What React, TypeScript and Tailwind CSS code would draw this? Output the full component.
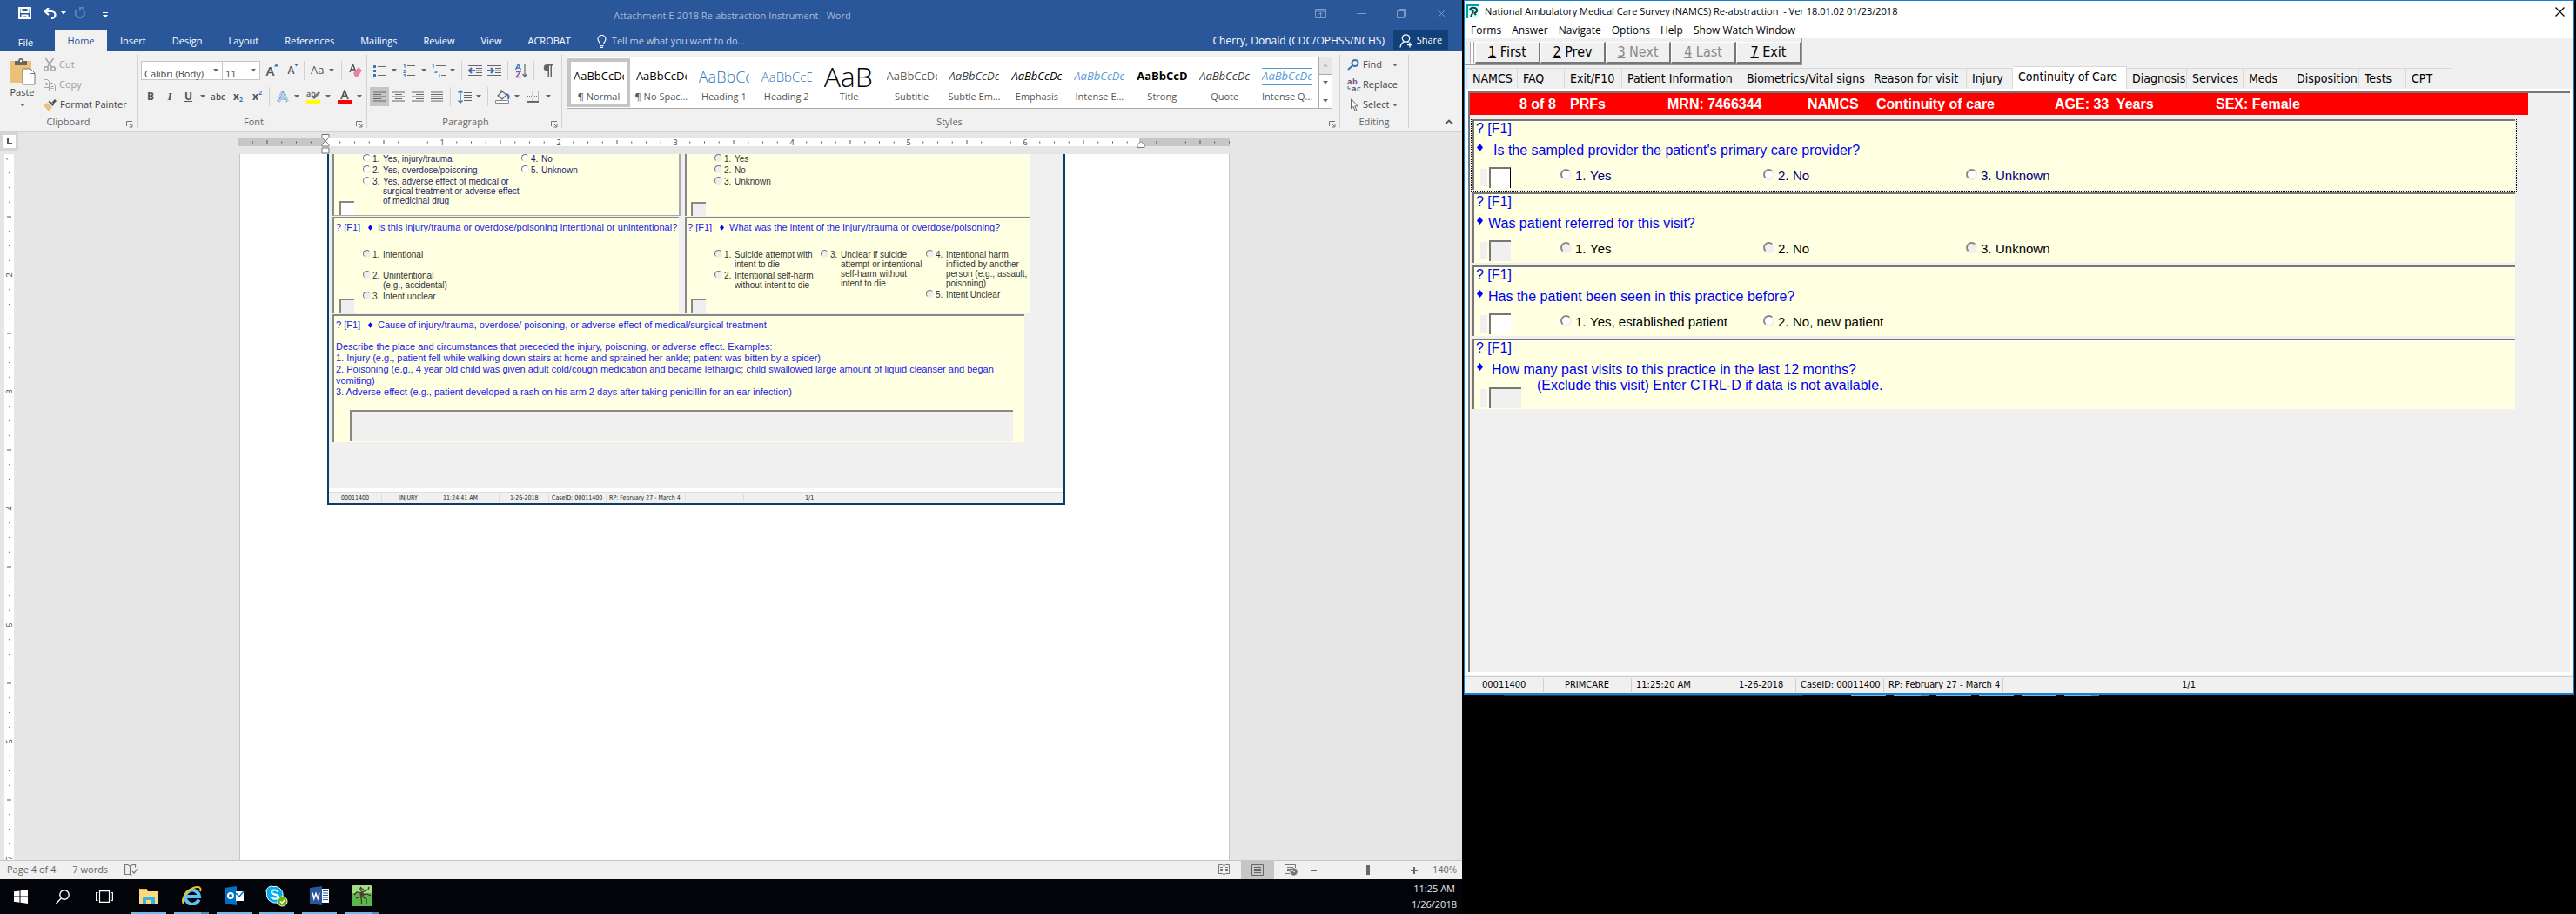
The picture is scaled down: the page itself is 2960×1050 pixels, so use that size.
import React, { ReactNode } from 'react';

const UI = "font-['Open_Sans','Noto_Sans',sans-serif]";
const TAHOMA = "font-['DejaVu_Sans_Condensed','DejaVu_Sans',sans-serif]";
const ARIAL = "font-['Liberation_Sans',Arial,sans-serif]";

/* ---------- small shared pieces ---------- */

function Caret({ className = 'text-[#666]' }: { className?: string }) {
  return (
    <svg width="6" height="4" viewBox="0 0 6 4" className={`shrink-0 ${className}`} fill="currentColor">
      <path d="M0 0h6L3 3.5z" />
    </svg>
  );
}

function Launcher({ label }: { label: string }) {
  return (
    <button aria-label={label} className="absolute right-1 bottom-0 text-[#777]">
      <svg width="8" height="8" viewBox="0 0 8 8" fill="none" stroke="currentColor">
        <path d="M.5 6V.5H7M3 3l3.5 3.5M7 3.5V7H3.5" />
      </svg>
    </button>
  );
}

function VSep() {
  return <div className="h-[22px] w-px shrink-0 bg-[#d2d2d2]" />;
}

function Tool({ label, children, className = '' }: { label: string; children: ReactNode; className?: string }) {
  return (
    <button aria-label={label} className={`flex h-[22px] shrink-0 items-center justify-center ${className}`}>
      {children}
    </button>
  );
}

function Diamond({ small = false }: { small?: boolean }) {
  return (
    <svg width={small ? 5 : 7} height={small ? 7 : 9} viewBox="0 0 7 9" className="shrink-0" fill="#00f">
      <path d="M3.5 0 7 4.5 3.5 9 0 4.5z" />
    </svg>
  );
}

/* ---------- Word: title bar and tabs ---------- */

function WordTitleBar() {
  return (
    <div className="flex h-[35px] items-start bg-[#2a579a] pt-2 text-white">
      <div className="flex flex-1 items-center pl-[21px]">
        <button aria-label="Save">
          <svg width="15" height="14" viewBox="0 0 15 14" fill="none" stroke="#fff" strokeWidth="2">
            <path d="M1 1h13v12H1zM3.500 1v5h8V1" />
            <path d="M4.500 13V9.500h6V13" />
          </svg>
        </button>
        <button aria-label="Undo" className="ml-[14px] flex items-center gap-[5px]">
          <svg width="15" height="13" viewBox="0 0 15 13" fill="none" stroke="#fff" strokeWidth="2.200">
            <path d="M6 0 1.500 4 6 8M2 4h7c6 0 6 8 0 8" />
          </svg>
          <Caret className="text-white" />
        </button>
        <button aria-label="Redo" className="ml-2">
          <svg width="15" height="14" viewBox="0 0 15 14" fill="none" stroke="#5f82b5" strokeWidth="2">
            <path d="M5 2.500A5.300 5.300 0 1 0 11.500 3M8 4.500V1h5" />
          </svg>
        </button>
        <button aria-label="Customize quick access toolbar" className="ml-[19px] flex flex-col items-center gap-[2px] pt-1">
          <span className="h-px w-[6px] bg-white" />
          <Caret className="text-white" />
        </button>
      </div>
      <h1 className="pt-px text-[11px] leading-[18px] text-[#a8bad8]">Attachment E-2018 Re-abstraction Instrument - Word</h1>
      <div className="flex flex-1 justify-end gap-[35px] pt-[2px] pr-[18px] text-[#7f9ac5]">
        <button aria-label="Ribbon display options">
          <svg width="13" height="11" viewBox="0 0 13 11" fill="none" stroke="currentColor">
            <path d="M.5.5h12v10H.5zM.5 3h12M6.500 9V4.500M4.500 6.500l2-2 2 2" />
          </svg>
        </button>
        <button aria-label="Minimize">
          <svg width="11" height="11" viewBox="0 0 11 11" stroke="currentColor">
            <path d="M0 5.500h11" />
          </svg>
        </button>
        <button aria-label="Restore">
          <svg width="11" height="11" viewBox="0 0 11 11" fill="none" stroke="currentColor">
            <path d="M.5 2.500h8v8h-8zM2.500 2.500v-2h8v8h-2" />
          </svg>
        </button>
        <button aria-label="Close">
          <svg width="11" height="11" viewBox="0 0 11 11" stroke="currentColor">
            <path d="m.5.5 10 10M10.500.5l-10 10" />
          </svg>
        </button>
      </div>
    </div>
  );
}

function WordTabs() {
  return (
    <div className="flex h-6 items-stretch bg-[#2a579a] text-[11px] text-white">
      <button className="w-[63px] pt-1 pr-1">File</button>
      <button className="w-[60px] bg-[#f1f1f1] text-[#2a579a]">Home</button>
      <nav className="flex gap-[30px] pl-[15px]">
        {['Insert', 'Design', 'Layout', 'References', 'Mailings', 'Review', 'View', 'ACROBAT'].map((t) => (
          <button key={t}>{t}</button>
        ))}
      </nav>
      <button className="ml-[30px] flex items-center gap-[6px] text-[#c3d0e5]">
        <svg width="11" height="15" viewBox="0 0 11 15" fill="none" stroke="#fff" strokeWidth="1.200">
          <path d="M3.500 10.500c0-2-2.500-3-2.500-5.500a4.500 4.500 0 0 1 9 0c0 2.500-2.500 3.500-2.500 5.500zM3.500 12.500h4M4 14.300h3" />
        </svg>
        Tell me what you want to do...
      </button>
      <div className="flex-1" />
      <button className="text-[12px]">Cherry, Donald (CDC/OPHSS/NCHS)</button>
      <button className="mr-4 mb-px ml-[10px] flex w-[63px] items-center justify-center gap-1 bg-[#124078]">
        <svg width="16" height="16" viewBox="0 0 16 16" fill="none" stroke="#fff" strokeWidth="1.300">
          <circle cx="7.500" cy="5" r="4.200" />
          <path d="M1 15.500c.5-4 2-5.500 4.500-6.500M9.500 9l1 .7M12 9.500v6M9 12.500h6" />
        </svg>
        Share
      </button>
    </div>
  );
}

/* ---------- Word: ribbon ---------- */

function GroupLabel({ children }: { children: ReactNode }) {
  return <div className="mt-auto text-center text-[11px] leading-[14px] text-[#666]">{children}</div>;
}

function ClipboardGroup() {
  return (
    <section className="relative flex w-[158px] flex-col border-r border-[#d2d2d2]">
      <div className="flex">
        <button className="flex w-[43px] flex-col items-center pl-2 text-[11px] leading-[16px] text-[#444]">
          <svg width="30" height="31" viewBox="0 0 30 31" className="mt-1">
            <path d="M1 3h24v25H1z" fill="#ebc177" />
            <path d="M6 3h4a3 3 0 0 1 6 0h4v5H6z" fill="#666" />
            <circle cx="13" cy="3" r="1.200" fill="#fff" />
            <path d="M15 12h9l5 5v13H15z" fill="#fff" stroke="#777" />
            <path d="M23.500 12v5.500H29" fill="none" stroke="#777" />
          </svg>
          <span>Paste</span>
          <span className="mt-[5px]"><Caret /></span>
        </button>
        <div className="ml-[7px] flex flex-col text-[11px]">
          <button className="flex h-[23px] items-center gap-1 text-[#a0a0a0]">
            <svg width="14" height="15" viewBox="0 0 14 15" fill="none" stroke="#a5a5a5" strokeWidth="1.600">
              <path d="M2.500 0 9.500 10M11.500 0l-7 10" />
              <circle cx="3" cy="12" r="2.200" />
              <circle cx="11" cy="12" r="2.200" />
            </svg>
            Cut
          </button>
          <button className="flex h-[23px] items-center gap-1 text-[#a0a0a0]">
            <svg width="14" height="14" viewBox="0 0 14 14" fill="none" stroke="#a5a5a5">
              <path d="M6 9.500H.5v-9h4l2 2V4M2.500 4.500h2M2.500 6.500h2M6.500 4.500h4l3 3v6h-7zM8.500 8.500h3M8.500 10.500h3" />
            </svg>
            Copy
          </button>
          <button className="flex h-[23px] items-center gap-1 text-[#444]">
            <svg width="15" height="14" viewBox="0 0 15 14">
              <path d="M0 7l4-3 6 5-4 5z" fill="#ebc177" />
              <path d="m5.500 3 5 5 1.500-1.500-5-5zM9.500 3.500 13 0l2 2-3.500 3.500z" fill="#555" />
            </svg>
            Format Painter
          </button>
        </div>
      </div>
      <GroupLabel>Clipboard</GroupLabel>
      <Launcher label="Clipboard options" />
    </section>
  );
}

function FontGroup() {
  return (
    <section className="relative flex w-[264px] flex-col border-r border-[#d2d2d2] pl-1 text-[#555]">
      <div className="mt-[7px] flex h-[22px] items-center">
        <div className="relative h-full w-[94px] border border-[#c6c6c6] bg-white">
          <select aria-label="Font" defaultValue="c" className="h-full w-full appearance-none pl-[3px] text-[11px] text-[#444]">
            <option value="c">Calibri (Body)</option>
          </select>
          <span className="pointer-events-none absolute top-1/2 right-1 -translate-y-1/2"><Caret className="block text-[#666]" /></span>
        </div>
        <div className="relative h-full w-[43px] border border-l-0 border-[#c6c6c6] bg-white">
          <select aria-label="Font size" defaultValue="11" className="h-full w-full appearance-none pl-[3px] text-[11px] text-[#444]">
            <option>11</option>
          </select>
          <span className="pointer-events-none absolute top-1/2 right-1 -translate-y-1/2"><Caret className="block text-[#666]" /></span>
        </div>
        <Tool label="Grow font" className="ml-[6px] w-4 text-[15px] font-semibold">A<svg width="5" height="4" className="mb-3" fill="#3b73b9"><path d="M0 3.500h5L2.500 0z" /></svg></Tool>
        <Tool label="Shrink font" className="ml-2 w-4 text-[12px] font-semibold">A<svg width="5" height="4" className="mb-3" fill="#3b73b9"><path d="M0 0h5L2.500 3.500z" /></svg></Tool>
        <div className="ml-1"><VSep /></div>
        <Tool label="Change case" className="ml-[7px] gap-[6px] text-[13px]">Aa<Caret /></Tool>
        <div className="ml-2"><VSep /></div>
        <Tool label="Clear formatting" className="ml-2">
          <svg width="16" height="16" viewBox="0 0 16 16">
            <path d="M1 10 4.500 1 8 10M2.500 7h4" fill="none" stroke="#555" strokeWidth="1.500" />
            <path d="m5 11 6-7 4 4-5 7H7z" fill="#e8839b" />
          </svg>
        </Tool>
      </div>
      <div className="mt-2 flex h-[22px] items-center pl-[6px]">
        <Tool label="Bold" className="w-[10px] text-[12px] font-bold">B</Tool>
        <Tool label="Italic" className="ml-3 w-[10px] font-['Liberation_Serif',serif] text-[13px] font-bold italic">I</Tool>
        <Tool label="Underline" className="ml-3 gap-[9px] text-[12px] font-bold"><u>U</u><Caret /></Tool>
        <Tool label="Strikethrough" className="ml-[6px] text-[10px] font-semibold"><s>abc</s></Tool>
        <Tool label="Subscript" className="ml-[7px] w-[15px] text-[12px] font-bold">x<span className="pt-2 text-[7px] text-[#3b73b9]">2</span></Tool>
        <Tool label="Superscript" className="ml-[7px] w-[15px] text-[12px] font-bold">x<span className="pb-2 text-[7px] text-[#3b73b9]">2</span></Tool>
        <div className="ml-[6px]"><VSep /></div>
        <Tool label="Text effects" className="ml-2 gap-[6px]">
          <svg width="14" height="14" viewBox="0 0 14 14" fill="none"><path d="M2 13 7 1l5 12M4 9h6" stroke="#9cc2e8" strokeWidth="4" /><path d="M2 13 7 1l5 12M4 9h6" stroke="#fff" strokeWidth="2" /><path d="M2 13 7 1l5 12M4 9h6" stroke="#3b73b9" strokeWidth=".8" /></svg>
          <Caret />
        </Tool>
        <Tool label="Highlight" className="ml-2 gap-[6px]">
          <svg width="16" height="16" viewBox="0 0 16 16" className="overflow-visible"><path d="M0 12h16v4H0z" fill="#ff0" /><text x="0" y="8" fontSize="9" fontWeight="600" fill="#555">ab</text><path d="m7 10 7-8 2 1.500-6.500 7.500z" fill="#777" /></svg>
          <Caret />
        </Tool>
        <Tool label="Font colour" className="ml-2 gap-[6px]">
          <svg width="16" height="16" viewBox="0 0 16 16"><path d="M0 12h16v4H0z" fill="#f00" /><path d="M4 11 8 1l4 10M5.500 7.500h5" fill="none" stroke="#555" strokeWidth="1.800" /></svg>
          <Caret />
        </Tool>
      </div>
      <GroupLabel>Font</GroupLabel>
      <Launcher label="Font options" />
    </section>
  );
}

function Lines({ rows }: { rows: [number, number][] }) {
  return (
    <svg width="14" height="14" viewBox="0 0 14 14" stroke="#666">
      {rows.map(([a, b], i) => (
        <path key={i} d={`M${a} ${i * 2.5 + 2}H${b}`} />
      ))}
    </svg>
  );
}

const full: [number, number] = [0, 14];

function ParagraphGroup() {
  return (
    <section className="relative flex w-[224px] flex-col border-r border-[#d2d2d2] pl-[3px]">
      <div className="mt-[7px] flex h-[22px] items-center pl-1">
        <Tool label="Bullets" className="gap-[7px]">
          <svg width="14" height="15" viewBox="0 0 14 15"><path d="M0 1h3v3H0zM0 6h3v3H0zM0 11h3v3H0z" fill="#3b73b9" /><path d="M5 2.500h9M5 7.500h9M5 12.500h9" stroke="#666" /></svg>
          <Caret />
        </Tool>
        <Tool label="Numbering" className="ml-[7px] gap-[7px]">
          <svg width="14" height="16" viewBox="0 0 14 16" className="overflow-visible"><g fontSize="6" fontWeight="700" fill="#3b73b9"><text y="5">1</text><text y="10.500">2</text><text y="16">3</text></g><path d="M5 2.500h9M5 8.500h9M5 13.500h9" stroke="#666" /></svg>
          <Caret />
        </Tool>
        <Tool label="Multilevel list" className="ml-[6px] gap-[4px]">
          <svg width="17" height="16" viewBox="0 0 17 16" className="overflow-visible"><g fontSize="6" fontWeight="700" fill="#3b73b9"><text y="5">1</text><text x="3" y="10.500">a</text><text x="8" y="16">i</text></g><path d="M5 2.500h12M8 8.500h9M11 13.500h6" stroke="#666" /></svg>
          <Caret />
        </Tool>
        <div className="ml-[7px]"><VSep /></div>
        <Tool label="Decrease indent" className="ml-[7px]">
          <svg width="16" height="14" viewBox="0 0 16 14"><path d="M0 1.500h16M9 4.500h7M9 7h7M9 9.500h7M0 12.500h16" stroke="#666" /><path d="M8 7H1m3-3L1 7l3 3" fill="none" stroke="#3b73b9" strokeWidth="2" /></svg>
        </Tool>
        <Tool label="Increase indent" className="ml-[6px]">
          <svg width="16" height="14" viewBox="0 0 16 14"><path d="M0 1.500h16M9 4.500h7M9 7h7M9 9.500h7M0 12.500h16" stroke="#666" /><path d="M0 7h7M4 4l3 3-3 3" fill="none" stroke="#3b73b9" strokeWidth="2" /></svg>
        </Tool>
        <div className="ml-[7px]"><VSep /></div>
        <Tool label="Sort" className="ml-2">
          <svg width="14" height="17" viewBox="0 0 14 17"><path d="M.5 7 3.500.5 6.500 7M1.500 5h4" fill="none" stroke="#3b73b9" strokeWidth="1.300" /><path d="M1 9.500h5L1 15.500h5.500" fill="none" stroke="#8b4fa0" strokeWidth="1.300" /><path d="M11 1v14M8.500 12l2.500 3 2.500-3" fill="none" stroke="#666" strokeWidth="1.200" /></svg>
        </Tool>
        <div className="ml-[7px]"><VSep /></div>
        <Tool label="Show formatting marks" className="ml-[10px]">
          <svg width="11" height="14" viewBox="0 0 11 14" fill="#666"><path d="M4.500 0H11v1.500h-1V14H8.500V1.500H7V14H5.500V7.500h-1a3.700 3.700 0 0 1 0-7.500z" /></svg>
        </Tool>
      </div>
      <div className="mt-2 flex h-[22px] items-center">
        <Tool label="Align left" className="w-[22px] bg-[#c5c5c5]"><Lines rows={[full, [0, 9], full, [0, 9], full]} /></Tool>
        <Tool label="Center" className="w-[22px]"><Lines rows={[full, [3, 11], full, [3, 11], full]} /></Tool>
        <Tool label="Align right" className="w-[22px]"><Lines rows={[full, [5, 14], full, [5, 14], full]} /></Tool>
        <Tool label="Justify" className="w-[22px]"><Lines rows={[full, full, full, full, full]} /></Tool>
        <div className="ml-1"><VSep /></div>
        <Tool label="Line spacing" className="ml-2 gap-[5px]">
          <svg width="16" height="16" viewBox="0 0 16 16" fill="none"><path d="M3 1v14M.5 3.500 3 1l2.500 2.500M.5 12.500 3 15l2.500-2.500" stroke="#3b73b9" strokeWidth="1.300" /><path d="M7 3.500h9M7 6.500h9M7 9.500h9M7 12.500h9" stroke="#666" /></svg>
          <Caret />
        </Tool>
        <div className="ml-[7px]"><VSep /></div>
        <Tool label="Shading" className="ml-2 gap-[5px]">
          <svg width="17" height="16" viewBox="0 0 17 16" fill="none"><path d="M.5 12.500h15v3H.5z" fill="#fff" stroke="#888" /><path d="m3 7 5-5 5 4-5 5zM7 4V0" stroke="#666" strokeWidth="1.200" /><path d="M13 5c3 1 3 3 2 6" stroke="#3b73b9" strokeWidth="2" /></svg>
          <Caret />
        </Tool>
        <Tool label="Borders" className="ml-2 gap-2">
          <svg width="14" height="14" viewBox="0 0 14 14" stroke="#777" fill="none"><path d="M.5.5h13v12H.5zM7 1v12M1 6.500h12" strokeDasharray="1 1" /><path d="M0 13h14" stroke="#444" strokeWidth="1.500" /></svg>
          <Caret />
        </Tool>
      </div>
      <GroupLabel>Paragraph</GroupLabel>
      <Launcher label="Paragraph options" />
    </section>
  );
}

const styles: [string, string][] = [
  ['¶ Normal', 'text-[13px] text-black'],
  ['¶ No Spac...', 'text-[13px] text-black'],
  ['Heading 1', 'text-[18px] font-light text-[#2e74b5]'],
  ['Heading 2', 'text-[15px] font-light text-[#2e74b5]'],
  ['Title', 'text-[32px] font-light text-black'],
  ['Subtitle', 'text-[13px] text-[#5a5a5a]'],
  ['Subtle Em...', 'text-[13px] italic text-[#404040]'],
  ['Emphasis', 'text-[13px] italic text-black'],
  ['Intense E...', 'text-[13px] italic text-[#5b9bd5]'],
  ['Strong', 'text-[13px] font-bold text-black'],
  ['Quote', 'text-[13px] italic text-[#404040]'],
  ['Intense Q...', 'text-[13px] italic text-[#5b9bd5] border-y border-[#5b9bd5]'],
];

function StylesGroup() {
  return (
    <section className="relative flex flex-1 flex-col border-r border-[#d2d2d2] pr-2 pl-[5px]">
      <div className="mt-[2px] flex h-[60px] border border-[#ababab] bg-white">
        <div className="flex flex-1 items-center">
          {styles.map(([name, cls], i) => (
            <button
              key={name}
              className={`flex h-14 min-w-0 flex-1 flex-col items-center justify-end border-4 ${i === 0 ? 'border-[#c5c5c5]' : 'border-transparent'}`}
            >
              <span className={`flex w-[58px] items-center overflow-hidden whitespace-nowrap ${name === 'Title' ? 'mb-1 h-6' : 'mb-[6px] h-5'} ${cls}`}>
                {name === 'Title' ? 'AaB' : 'AaBbCcDc'}
              </span>
              <span className="mb-px text-[11px] leading-[14px] whitespace-nowrap text-[#555]">{name}</span>
            </button>
          ))}
        </div>
        <div className="flex w-[15px] flex-col divide-y divide-[#ababab] border-l border-[#ababab]">
          <button aria-label="Previous row" className="flex flex-1 items-center justify-center bg-[#e6e6e6]">
            <svg width="6" height="4" fill="#bbb"><path d="M0 3.500h6L3 0z" /></svg>
          </button>
          <button aria-label="Next row" className="flex flex-1 items-center justify-center"><Caret /></button>
          <button aria-label="More styles" className="flex flex-1 flex-col items-center justify-center gap-[2px]">
            <span className="h-px w-[7px] bg-[#666]" />
            <Caret />
          </button>
        </div>
      </div>
      <GroupLabel>Styles</GroupLabel>
      <Launcher label="Styles options" />
    </section>
  );
}

function EditingGroup() {
  return (
    <>
      <section className="flex w-[79px] flex-col border-r border-[#d2d2d2] pl-2 text-[11px] text-[#444]">
        <button className="flex h-[23px] items-center gap-1">
          <svg width="14" height="13" viewBox="0 0 14 13" fill="none" stroke="#3b73b9" strokeWidth="2"><circle cx="9" cy="4.500" r="3.500" /><path d="M6.500 7 1 12" /></svg>
          Find<span className="ml-2"><Caret /></span>
        </button>
        <button className="flex h-[23px] items-center gap-[2px]">
          <svg width="16" height="16" viewBox="0 0 16 16" fontSize="9" fontWeight="700" className="overflow-visible"><text y="7" fill="#555">a</text><text x="6" y="7" fill="#8b4fa0">b</text><text x="5" y="15" fill="#555">a</text><text x="11" y="15" fill="#3b73b9">c</text><path d="M1 9v3h3" fill="none" stroke="#3b73b9" /></svg>
          Replace
        </button>
        <button className="flex h-[23px] items-center gap-1">
          <svg width="14" height="15" viewBox="0 0 14 15" fill="#fff" stroke="#666"><path d="M4.500.8v11l2.500-2.500 2 5 1.800-.8-2-4.700h3.400z" /></svg>
          Select<Caret />
        </button>
        <div className="mt-auto pr-2 text-center leading-[14px] text-[#666]">Editing</div>
      </section>
      <div className="flex w-[61px] items-end justify-end pr-[10px] pb-1">
        <button aria-label="Collapse the ribbon">
          <svg width="10" height="6" viewBox="0 0 10 6" fill="none" stroke="#555" strokeWidth="1.800"><path d="m1 5.500 4-4 4 4" /></svg>
        </button>
      </div>
    </>
  );
}

/* ---------- Word: rulers and document ---------- */

const INCH = 134;

function HorizontalRuler() {
  const ticks = Array.from({ length: 69 }, (_, i) => i - 6).filter((n) => n !== 0 && n !== 56);
  return (
    <div className="flex h-[25px]">
      <button aria-label="Tab selector" className="flex h-[21px] w-[21px] items-center justify-center bg-[#d5d5d5]">
        <span className="flex h-[15px] w-[15px] items-center justify-center bg-white">
          <svg width="6" height="7" fill="none" stroke="#555" strokeWidth="2"><path d="M1 0v6h5" /></svg>
        </span>
      </button>
      <div className="flex flex-1 justify-center pr-[15px]">
        <svg width="1140" height="25" viewBox="0 0 1140 25" fontSize="9" fill="#444">
          <path d="M0 6h1140v10H0z" fill="#c6c6c6" />
          <path d="M100 6h936v10H100z" fill="#fff" />
          {ticks.map((n) => {
            const x = 101 + (n * INCH) / 8;
            if (n > 0 && n % 8 === 0) return <text key={n} x={x} y="15" textAnchor="middle">{n / 8}</text>;
            return <path key={n} d={Math.abs(n % 8) === 4 ? `M${x} 9v5` : `M${x} 10.500v2`} stroke="#555" />;
          })}
          <g fill="#fff" stroke="#777">
            <path d="M97 2.500h8v3l-4 5-4-5zM97 16v-2l4-4 4 4v2zM97 18h8v6h-8z" />
            <path d="M1034 17.500v-3l4-4 4 4v3z" />
          </g>
        </svg>
      </div>
    </div>
  );
}

function VerticalRuler() {
  const ticks = Array.from({ length: 49 }, (_, i) => i);
  return (
    <svg width="11" className="ml-[5px] w-[11px] shrink-0 self-stretch overflow-hidden bg-white" fontSize="9" fill="#444">
      {ticks.map((n) => {
        const y = 5 + (n * INCH) / 8;
        if (n % 8 === 0) return <text key={n} x="9" y={y} textAnchor="middle" transform={`rotate(-90 9 ${y})`}>{n / 8 + 1}</text>;
        return <path key={n} d={n % 8 === 4 ? `M3 ${y}h5` : `M5 ${y}h2`} stroke="#555" />;
      })}
    </svg>
  );
}

type Opt = { n: number; text: string[] };

function DocOptions({ name, cols, white = false }: { name: string; cols: [string, Opt[]][]; white?: boolean }) {
  return (
    <div className={`flex text-[10px] leading-[11px] ${white ? 'text-[#1c1c70]' : 'text-[#333]'}`}>
      {cols.map(([w, opts], i) => (
        <div key={i} className={`flex shrink-0 flex-col gap-[2px] ${w}`}>
          {opts.map((o) => (
            <label key={o.n} className="flex whitespace-nowrap">
              <input
                type="radio"
                name={name}
                className={`mr-[2px] h-[9px] w-[9px] shrink-0 appearance-none rounded-full border border-[#777] border-r-[#eee] border-b-[#eee] ${white ? 'bg-white' : 'bg-[#eee]'}`}
              />
              <span className="w-3 shrink-0">{o.n}.</span>
              <span>{o.text.map((t, k) => <span key={k} className="block">{t}</span>)}</span>
            </label>
          ))}
        </div>
      ))}
    </div>
  );
}

function DocBox({ label, white = false }: { label: string; white?: boolean }) {
  return (
    <input
      aria-label={label}
      className={`h-4 w-[17px] shrink-0 self-end border-t-2 border-l-2 border-[#888] ${white ? 'bg-white' : 'bg-[#eee]'}`}
    />
  );
}

function F1({ q }: { q: string }) {
  return (
    <p className="flex items-center text-[11px] leading-[13px] whitespace-nowrap text-[#2020f0]">
      <span className="w-[37px]">? [F1]</span>
      <Diamond small />
      <span className="ml-[6px]">{q}</span>
    </p>
  );
}

function EmbeddedForm() {
  return (
    <div className={`ml-[100px] w-[848px] border-x-2 border-b-2 border-[#123a66] bg-[#f0f0f0] ${ARIAL}`}>
      <div className="pl-[4px]">
        <div className="flex gap-[5px]">
          <div className="flex h-[71px] w-[400px] border-r-2 border-b border-l-2 border-r-[#aaa] border-b-[#aaa] border-l-[#888] bg-[#ffffe1] pl-[6px]">
            <DocBox label="Injury answer" white />
            <div className="ml-[10px]">
              <DocOptions
                white
                name="d1"
                cols={[
                  ['w-[182px]', [{ n: 1, text: ['Yes, injury/trauma'] }, { n: 2, text: ['Yes, overdose/poisoning'] }, { n: 3, text: ['Yes, adverse effect of medical or', 'surgical treatment or adverse effect', 'of medicinal drug'] }]],
                  ['w-[120px]', [{ n: 4, text: ['No'] }, { n: 5, text: ['Unknown'] }]],
                ]}
              />
            </div>
          </div>
          <div className="flex h-[71px] w-[397px] border-l-2 border-[#888] bg-[#ffffe1] pl-[5px]">
            <DocBox label="Second answer" />
            <div className="ml-[10px]">
              <DocOptions name="d2" cols={[['w-[120px]', [{ n: 1, text: ['Yes'] }, { n: 2, text: ['No'] }, { n: 3, text: ['Unknown'] }]]]} />
            </div>
          </div>
        </div>
        <div className="mt-px flex gap-[7px]">
          <div className="flex h-[110px] w-[398px] flex-col border-t-2 border-l-2 border-[#888] bg-[#ffffe1] pt-1 pl-[2px]">
            <F1 q="Is this injury/trauma or overdose/poisoning intentional or unintentional?" />
            <div className="flex flex-1 pl-1">
              <DocBox label="Intentional answer" />
              <div className="mt-[19px] ml-[10px]">
                <DocOptions
                  name="d3"
                  cols={[['w-[182px]', [{ n: 1, text: ['Intentional', '\u00a0'] }, { n: 2, text: ['Unintentional', '(e.g., accidental)'] }, { n: 3, text: ['Intent unclear'] }]]]}
                />
              </div>
            </div>
          </div>
          <div className="flex h-[110px] w-[397px] flex-col border-t-2 border-l-2 border-[#888] bg-[#ffffe1] pt-1 pl-[1px]">
            <F1 q="What was the intent of the injury/trauma or overdose/poisoning?" />
            <div className="flex flex-1 pl-1">
              <DocBox label="Intent answer" />
              <div className="mt-[19px] ml-[10px]">
                <DocOptions
                  name="d4"
                  cols={[
                    ['w-[122px]', [{ n: 1, text: ['Suicide attempt with', 'intent to die'] }, { n: 2, text: ['Intentional self-harm', 'without intent to die'] }]],
                    ['w-[121px]', [{ n: 3, text: ['Unclear if suicide', 'attempt or intentional', 'self-harm without', 'intent to die'] }]],
                    ['w-[110px]', [{ n: 4, text: ['Intentional harm', 'inflicted by another', 'person (e.g., assault,', 'poisoning)'] }, { n: 5, text: ['Intent Unclear'] }]],
                  ]}
                />
              </div>
            </div>
          </div>
        </div>
        <div className="mt-[2px] h-[147px] w-[795px] border-t-2 border-l-2 border-[#888] bg-[#ffffe1] pt-1 pl-[2px] text-[11px] leading-[13px] text-[#2020f0]">
          <F1 q="Cause of injury/trauma, overdose/ poisoning, or adverse effect of medical/surgical treatment" />
          <p className="mt-3">Describe the place and circumstances that preceded the injury, poisoning, or adverse effect. Examples:</p>
          <p>1. Injury (e.g., patient fell while walking down stairs at home and sprained her ankle; patient was bitten by a spider)</p>
          <p>2. Poisoning (e.g., 4 year old child was given adult cold/cough medication and became lethargic; child swallowed large amount of liquid cleanser and began vomiting)</p>
          <p>3. Adverse effect (e.g., patient developed a rash on his arm 2 days after taking penicillin for an ear infection)</p>
          <textarea aria-label="Cause description" className="mt-[14px] ml-4 block h-[36px] w-[762px] resize-none border-t-2 border-l-2 border-[#888] bg-[#f0f0f0]" />
        </div>
      </div>
      <div className="mt-[53px] h-1 bg-white" />
      <div className={`flex h-[13px] items-center border-t border-[#ddd] text-[7px] text-[#222] ${TAHOMA}`}>
        <span className="w-[60px] pl-[14px]">00011400</span>
        <span className="w-[66px] border-l border-[#ddd] pl-5">INJURY</span>
        <span className="w-[69px] border-l border-[#ddd] pl-1">11:24:41 AM</span>
        <span className="w-[57px] border-l border-[#ddd] pl-3">1-26-2018</span>
        <span className="w-[66px] border-l border-[#ddd] pl-[3px]">CaseID: 00011400</span>
        <span className="w-[91px] border-l border-[#ddd] pl-[3px]">RP: February 27 - March 4</span>
        <span className="h-2 w-[67px] border-l border-[#ddd]" />
        <span className="h-2 w-[67px] border-l border-[#ddd]" />
        <span className="border-l border-[#ddd] pl-[3px]">1/1</span>
      </div>
    </div>
  );
}

function WordStatusBar() {
  return (
    <footer className="flex h-[22px] items-center border-t border-[#c6c6c6] bg-[#f0f0f0] text-[11px] text-[#666]">
      <span className="ml-2">Page 4 of 4</span>
      <span className="ml-[19px]">7 words</span>
      <button aria-label="Proofing" className="ml-[19px]">
        <svg width="15" height="13" viewBox="0 0 15 13" fill="none" stroke="#777" strokeWidth="1.200"><path d="M6.500 11.500h-6v-11h3l3 1.500zM6.500 2l3-1.500h3v3M6.500 11.500l2 1M9 8l2 2 4-5" /></svg>
      </button>
      <div className="flex-1" />
      <button aria-label="Read mode" className="mr-[13px]">
        <svg width="13" height="13" viewBox="0 0 13 13" fill="none" stroke="#777"><path d="M.5.5h4l2 1.500 2-1.500h4v10h-4l-2 1.500-2-1.500h-4zM6.500 2v10M2 3.500h3M2 5.500h3M2 7.500h3M8 3.500h3M8 5.500h3M8 7.500h3" /></svg>
      </button>
      <button aria-label="Print layout" className="flex h-full w-[38px] items-center justify-center bg-[#c6c6c6]">
        <svg width="14" height="13" viewBox="0 0 14 13" fill="none" stroke="#666"><path d="M.5.5h13v12H.5zM3 3.500h8M3 5.500h8M3 7.500h8M3 9.500h8" /></svg>
      </button>
      <button aria-label="Web layout" className="ml-3">
        <svg width="15" height="13" viewBox="0 0 15 13" fill="none" stroke="#777"><path d="M6 10.500H.5V.5h12V4M3 3.500h7M3 5.500h5M3 7.500h3" /><circle cx="10.500" cy="8.500" r="3.800" fill="#777" /><path d="M8 8c2-2 2 2 4 0" stroke="#fff" /></svg>
      </button>
      <button aria-label="Zoom out" className="ml-4 h-[2px] w-[6px] bg-[#666]" />
      <input
        type="range"
        aria-label="Zoom"
        defaultValue={55}
        className="mx-1 h-3 w-[100px] appearance-none bg-transparent [&::-webkit-slider-runnable-track]:h-px [&::-webkit-slider-runnable-track]:bg-[#aaa] [&::-webkit-slider-thumb]:-mt-[5px] [&::-webkit-slider-thumb]:h-[11px] [&::-webkit-slider-thumb]:w-1 [&::-webkit-slider-thumb]:appearance-none [&::-webkit-slider-thumb]:bg-[#666]"
      />
      <button aria-label="Zoom in">
        <svg width="8" height="8" stroke="#666" strokeWidth="2"><path d="M0 4h8M4 0v8" /></svg>
      </button>
      <span className="mr-[6px] ml-[17px]">140%</span>
    </footer>
  );
}

/* ---------- Windows taskbar ---------- */

function TaskIcon({ label, extra = false, children }: { label: string; extra?: boolean; children: ReactNode }) {
  return (
    <button aria-label={label} className="mr-[9px] flex w-10 flex-col items-center">
      <span className="flex flex-1 items-center">{children}</span>
      <span className="flex h-[2px] w-full">
        <span className="flex-1 bg-[#76b9ed]" />
        {extra && <span className="w-[9px] bg-[#5a87ad]" />}
      </span>
    </button>
  );
}

function Taskbar() {
  return (
    <div className="flex h-10 bg-[#020409]">
      <div className="flex w-[151px] items-center pl-4">
        <button aria-label="Start">
          <svg width="16" height="16" viewBox="0 0 16 16" fill="#fff"><path d="M0 2.300 6.500 1.400v6.200H0zM7.500 1.200 16 0v7.600H7.500zM0 8.500h6.500v6.200L0 13.800zM7.500 8.500H16V16l-8.500-1.200z" /></svg>
        </button>
        <button aria-label="Search" className="ml-8">
          <svg width="16" height="17" viewBox="0 0 16 17" fill="none" stroke="#fff" strokeWidth="1.400"><circle cx="10" cy="6" r="5.200" /><path d="M6.200 10 0 16.500" /></svg>
        </button>
        <button aria-label="Task view" className="ml-[30px]">
          <svg width="20" height="14" viewBox="0 0 20 14" fill="none" stroke="#fff" strokeWidth="1.200"><path d="M4.500.6h11v12.800h-11zM2.500 2.500H.6v9h1.900M17.500 2.500h1.900v9h-1.900" /></svg>
        </button>
      </div>
      <TaskIcon label="File Explorer">
        <svg width="22" height="19" viewBox="0 0 22 19"><path d="M0 1h8l2 3h12v14H0z" fill="#fbd97e" /><path d="M1 1h8v2H1z" fill="#f0b53d" /><path d="M4 18V12q0-1.500 1.500-1.500h11q1.500 0 1.500 1.500v6h-4v-4H8v4z" fill="#38b1e5" /></svg>
      </TaskIcon>
      <TaskIcon label="Internet Explorer" extra>
        <svg width="23" height="22" viewBox="0 0 23 22" fill="none"><path d="M19.500 15.500A8 8 0 1 1 20 12H6" stroke="#5cc3f2" strokeWidth="4" /><path d="M2 20C-2 14 8 2 17 1c5-.5 5 3 4 5" stroke="#f4c21f" strokeWidth="2" /></svg>
      </TaskIcon>
      <TaskIcon label="Outlook">
        <svg width="23" height="22" viewBox="0 0 23 22"><path d="M0 2 14 0v22L0 20z" fill="#0072c6" /><path d="M13 6h9v11h-9z" fill="#fff" /><path d="m13 8 4 4 5-6" fill="none" stroke="#0072c6" strokeWidth="1.500" /><circle cx="7" cy="11" r="3" fill="none" stroke="#fff" strokeWidth="2" /></svg>
      </TaskIcon>
      <TaskIcon label="Skype">
        <svg width="26" height="25" viewBox="0 0 26 25"><path d="M1 6.500A6 6 0 0 1 9 1.500 9.500 9.500 0 0 1 20 12a6 6 0 0 1-8 8A9.500 9.500 0 0 1 1.500 9.500z" fill="#00aff0" stroke="#fff" /><path d="M14.500 7.500C13 4.500 7 5 7 8c0 3.500 8 1.800 8 5.200 0 3-6.500 3.500-8.500 0" fill="none" stroke="#fff" strokeWidth="2.200" /><circle cx="19.500" cy="18.500" r="5.500" fill="#6bb700" stroke="#fff" /><path d="m17 18.500 2 2 3.500-4" fill="none" stroke="#fff" strokeWidth="1.500" /></svg>
      </TaskIcon>
      <TaskIcon label="Word">
        <svg width="23" height="22" viewBox="0 0 23 22"><path d="M12 3h10v16H12z" fill="#fff" /><path d="M15 5.500h6M15 8h6M15 10.500h6M15 13h6M15 15.500h6" stroke="#2b579a" /><path d="M0 2 14 0v22L0 20z" fill="#2b579a" /><path d="m3 7.500 1.800 7L7 8.500l2.200 6 1.800-7" fill="none" stroke="#fff" strokeWidth="1.500" /></svg>
      </TaskIcon>
      <TaskIcon label="Blaise" extra>
        <svg width="24" height="24" viewBox="0 0 24 24"><rect width="24" height="24" rx="2" fill="#a3dc86" /><path d="M0 9h24v15H0z" fill="#5fb64e" /><path d="M11 2c-3 3 0 4 1 6l-1 5c-1 3 2 5 0 8M12 8l7-3 1-3M12 9l-6-1-3 3M12 11l6-1 4 2M11 13l-6 2M12 13l5 3v5M10 3l4 2" fill="none" stroke="#3c2f22" strokeWidth="1.200" /><circle cx="12" cy="10.500" r="2.500" fill="#55402e" /></svg>
      </TaskIcon>
      <div className="flex-1" />
      <time className="mr-[6px] text-right text-[11px] leading-[18px] text-[#e8e8e8]">
        <span className="block pt-[2px] pr-[2px]">11:25 AM</span>
        <span className="block">1/26/2018</span>
      </time>
    </div>
  );
}

/* ---------- NAMCS window ---------- */

const tabs: [string, string][] = [
  ['NAMCS', 'w-[59px]'],
  ['FAQ', 'w-[54px]'],
  ['Exit/F10', 'w-[66px]'],
  ['Patient Information', 'w-[137px]'],
  ['Biometrics/Vital signs', 'w-[146px]'],
  ['Reason for visit', 'w-[113px]'],
  ['Injury', 'w-[53px]'],
  ['Continuity of Care', 'w-[131px]'],
  ['Diagnosis', 'w-[69px]'],
  ['Services', 'w-[65px]'],
  ['Meds', 'w-[55px]'],
  ['Disposition', 'w-[78px]'],
  ['Tests', 'w-[54px]'],
  ['CPT', 'w-[53px]'],
];

function NamcsTabs() {
  return (
    <div role="tablist" className="mt-px flex h-[26px] items-end pl-[2px] text-[14px]">
      {tabs.map(([t, w]) => {
        const on = t === 'Continuity of Care';
        return (
          <button
            key={t}
            role="tab"
            aria-selected={on}
            className={`shrink-0 border-t border-r border-[#d9d9d9] pl-[6px] text-left whitespace-nowrap first:border-l ${w} ${on ? 'h-[26px] bg-white pb-[2px]' : 'h-6 bg-[#f0f0f0]'}`}
          >
            {t}
          </button>
        );
      })}
    </div>
  );
}

function Question({
  name,
  q,
  opts,
  focus = false,
  white = false,
  indent = false,
}: {
  name: string;
  q: string;
  opts: string[];
  focus?: boolean;
  white?: boolean;
  indent?: boolean;
}) {
  return (
    <fieldset
      className={`h-[81px] border-t-2 border-l-2 border-[#777] bg-[#ffffe1] pl-[2px] ${focus ? 'outline-1 outline-offset-1 outline-black outline-dotted' : ''}`}
    >
      <p className="text-[16px] leading-[18px] text-[#0000f0]">? [F1]</p>
      <p className="mt-[7px] flex text-[16px] leading-[18px] text-[#0000f0]">
        <span className="ml-px pt-px"><Diamond /></span>
        <span className={indent ? 'ml-3' : 'ml-[6px]'}>{q}</span>
      </p>
      <div className={`mt-[10px] flex text-[15px] leading-5 ${focus ? 'text-[#000080]' : 'text-black'}`}>
        <span className="mt-[2px] ml-[5px] h-5 w-2 bg-[#f0f0f0]" />
        <input aria-label={q} className={`ml-[2px] h-6 w-[25px] border-t-2 border-l-2 border-[#777] ${white ? 'bg-white' : 'bg-[#f0f0f0]'} ${focus ? 'border-r border-r-black' : ''}`} />
        <div className="flex pl-[57px]">
          {opts.map((o, i) => (
            <label key={o} className="flex w-[233px] whitespace-nowrap">
              <input
                type="radio"
                name={name}
                className={`mt-[2px] mr-1 h-[13px] w-[13px] appearance-none rounded-full border-2 border-[#888] border-r-[#eee] border-b-[#eee] ${white ? 'bg-white' : 'bg-[#f0f0f0]'}`}
              />
              <span className="w-[17px]">{i + 1}.</span>
              {o}
            </label>
          ))}
        </div>
      </div>
    </fieldset>
  );
}

function NamcsWindow() {
  return (
    <section className="flex h-[798px] flex-col border border-b-2 border-[#1a80d4] bg-[#f0f0f0] text-black">
      <header className={`flex h-6 items-center bg-white pl-[2px] text-[11px] ${UI}`}>
        <svg width="15" height="16" viewBox="0 0 15 16"><path d="M0 0h15v16H0z" fill="#d5ffff" /><path d="M0 0h15v2H2v14H0z" fill="#00a0a0" /><path d="M4 6c1-3 7-3 8 0s-2 3-3 4M4 6l4 1-1 3M7 10l-2 4M9 10l2 2" fill="none" stroke="#064a4a" strokeWidth="2" /></svg>
        <h2 className="ml-[6px] whitespace-pre">National Ambulatory Medical Care Survey (NAMCS) Re-abstraction  - Ver 18.01.02 01/23/2018</h2>
        <div className="flex-1" />
        <button aria-label="Close" className="mr-[10px]">
          <svg width="11" height="11" viewBox="0 0 11 11" stroke="#000" strokeWidth="1.200"><path d="m.5.5 10 10M10.500.5l-10 10" /></svg>
        </button>
      </header>
      <nav className={`flex h-[19px] items-center gap-3 bg-white pl-[7px] text-[12px] ${UI}`}>
        {['Forms', 'Answer', 'Navigate', 'Options', 'Help', 'Show Watch Window'].map((m) => (
          <button key={m}>{m}</button>
        ))}
      </nav>
      <div className={TAHOMA}>
        <div className="flex h-[31px] w-[388px] border-r border-b border-[#999] pt-1 pl-[6px]">
          <span className="mr-px h-6 w-[5px] border-x border-[#aaa] bg-white" />
          {['1 First', '2 Prev', '3 Next', '4 Last', '7 Exit'].map((b) => (
            <button
              key={b}
              disabled={b === '3 Next' || b === '4 Last'}
              className="h-[25px] w-[75px] border-t border-r-2 border-b-2 border-l border-t-white border-r-[#777] border-b-[#777] border-l-white text-[16px] leading-5 disabled:text-[#8a8a8a]"
            >
              <u>{b[0]}</u>
              {b.slice(1)}
            </button>
          ))}
        </div>
        <NamcsTabs />
      </div>
      <div className={`mr-[2px] ml-[2px] flex-1 border-2 border-t-[3px] border-b-4 border-white ${ARIAL}`}>
        <div className="h-full border-t-2 border-l-2 border-[#777]">
          <div className="mr-[48px] flex h-[25px] items-center bg-[#f00] pl-[57px] text-[16px] font-bold whitespace-pre text-white">
            <span className="w-[58px]">8 of 8</span>
            <span className="w-[112px]">PRFs</span>
            <span className="w-[161px]">MRN: 7466344</span>
            <span className="w-[79px]">NAMCS</span>
            <span className="w-[205px]">Continuity of care</span>
            <span className="w-[185px]">AGE: 33  Years</span>
            <span>SEX: Female</span>
          </div>
          <div className="mt-[5px] mr-[63px] ml-[3px] flex flex-col gap-[3px]">
            <Question name="q1" focus white indent q="Is the sampled provider the patient's primary care provider?" opts={['Yes', 'No', 'Unknown']} />
            <Question name="q2" q="Was patient referred for this visit?" opts={['Yes', 'No', 'Unknown']} />
            <Question name="q3" white q="Has the patient been seen in this practice before?" opts={['Yes, established patient', 'No, new patient']} />
            <div className="h-[81px] border-t-2 border-l-2 border-[#777] bg-[#ffffe1] pl-[2px] text-[16px] leading-[18px] text-[#0000f0]">
              <p>? [F1]</p>
              <p className="mt-[7px] flex">
                <span className="ml-px pt-px"><Diamond /></span>
                <label htmlFor="visits" className="ml-[10px]">How many past visits to this practice in the last 12 months?</label>
              </p>
              <div className="flex">
                <span className="mt-[13px] ml-[5px] h-5 w-2 bg-[#f0f0f0]" />
                <input id="visits" className="mt-[11px] ml-[2px] h-6 w-[37px] border-t-2 border-l-2 border-[#777] bg-[#f0f0f0]" />
                <span className="ml-[18px]">(Exclude this visit) Enter CTRL-D if data is not available.</span>
              </div>
            </div>
          </div>
        </div>
      </div>
      <footer className={`mt-px flex h-[19px] items-center border-t border-[#d0d0d0] text-[11px] whitespace-nowrap ${TAHOMA}`}>
        <span className="w-[90px] pl-5">00011400</span>
        <span className="w-[101px] border-l border-[#d0d0d0] pl-6">PRIMCARE</span>
        <span className="w-[103px] border-l border-[#d0d0d0] pl-[5px]">11:25:20 AM</span>
        <span className="w-[86px] border-l border-[#d0d0d0] pl-5">1-26-2018</span>
        <span className="w-[101px] border-l border-[#d0d0d0] pl-[5px]">CaseID: 00011400</span>
        <span className="w-[137px] border-l border-[#d0d0d0] pl-[5px]">RP: February 27 - March 4</span>
        <span className="h-4 w-[100px] border-l border-[#d0d0d0]" />
        <span className="h-4 w-[100px] border-l border-[#d0d0d0]" />
        <span className="border-l border-[#d0d0d0] pl-[5px]">1/1</span>
      </footer>
    </section>
  );
}

const peeks = ['ml-[55px] w-10', 'ml-[9px] w-10 border-r-[9px]', 'ml-[9px] w-10', 'ml-[9px] w-10', 'ml-[9px] w-10', 'ml-[9px] w-10 border-r-[9px]'];

export default function App() {
  return (
    <div className={`grid min-h-screen grid-cols-[minmax(0,1682fr)_minmax(0,1278fr)] bg-black ${UI}`}>
      <div className="mr-[2px] flex flex-col">
        <WordTitleBar />
        <WordTabs />
        <div className="flex h-[93px] border-b border-[#d2d2d2] bg-[#f1f1f1] py-1">
          <ClipboardGroup />
          <FontGroup />
          <ParagraphGroup />
          <StylesGroup />
          <EditingGroup />
        </div>
        <main className="flex flex-1 flex-col bg-[#e6e6e6]">
          <HorizontalRuler />
          <div className="flex flex-1">
            <VerticalRuler />
            <div className="flex flex-1 justify-center pr-2">
              <div className="w-[1138px] border-x border-[#c6c6c6] bg-white">
                <EmbeddedForm />
              </div>
            </div>
          </div>
        </main>
        <WordStatusBar />
        <Taskbar />
      </div>
      <div className="mr-[2px]">
        <NamcsWindow />
        <div className="flex h-[2px]">
          <span className="ml-[46px] w-[344px] bg-[#333]" />
          {peeks.map((p, i) => (
            <span key={i} className={`border-[#5a87ad] bg-[#76b9ed] ${p}`} />
          ))}
        </div>
      </div>
    </div>
  );
}
